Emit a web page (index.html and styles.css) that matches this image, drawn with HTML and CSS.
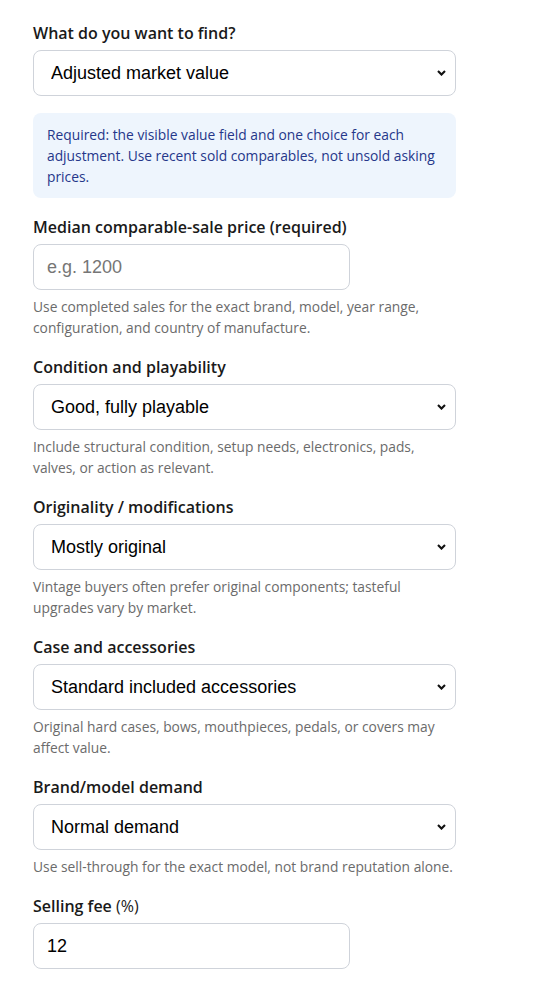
FILE: index.html
```html
<!DOCTYPE html>
<html lang="en">
<head>
<meta charset="utf-8">
<title>Instrument resale value</title>
<link rel="stylesheet" href="styles.css">
</head>
<body>
<form class="calc">
  <div class="field">
    <label class="field-label" for="goal">What do you want to find?</label>
    <select id="goal" class="control">
      <option selected>Adjusted market value</option>
      <option>Net proceeds after fees</option>
    </select>
    <div class="notice">Required: the visible value field and one choice for each adjustment. Use recent sold comparables, not unsold asking prices.</div>
  </div>

  <div class="field">
    <label class="field-label" for="median">Median comparable-sale price (required)</label>
    <input id="median" class="control control-short" type="text" placeholder="e.g. 1200">
    <p class="hint">Use completed sales for the exact brand, model, year range, configuration, and country of manufacture.</p>
  </div>

  <div class="field">
    <label class="field-label" for="condition">Condition and playability</label>
    <select id="condition" class="control">
      <option selected>Good, fully playable</option>
    </select>
    <p class="hint">Include structural condition, setup needs, electronics, pads, valves, or action as relevant.</p>
  </div>

  <div class="field">
    <label class="field-label" for="originality">Originality / modifications</label>
    <select id="originality" class="control">
      <option selected>Mostly original</option>
    </select>
    <p class="hint">Vintage buyers often prefer original components; tasteful upgrades vary by market.</p>
  </div>

  <div class="field">
    <label class="field-label" for="case">Case and accessories</label>
    <select id="case" class="control">
      <option selected>Standard included accessories</option>
    </select>
    <p class="hint">Original hard cases, bows, mouthpieces, pedals, or covers may affect value.</p>
  </div>

  <div class="field">
    <label class="field-label" for="demand">Brand/model demand</label>
    <select id="demand" class="control">
      <option selected>Normal demand</option>
    </select>
    <p class="hint">Use sell-through for the exact model, not brand reputation alone.</p>
  </div>

  <div class="field">
    <label class="field-label" for="fee">Selling fee <span class="unit">(%)</span></label>
    <input id="fee" class="control control-short" type="text" value="12">
  </div>
</form>
</body>
</html>
```

FILE: styles.css
```css
html, body {
  margin: 0;
  padding: 0;
  background: #ffffff;
}

body {
  font-family: "Open Sans", "Noto Sans", sans-serif;
  color: #1a1a1a;
}

.calc {
  width: 423px;
  padding: 21px 0 0 33px;
  display: flex;
  flex-direction: column;
  gap: 17px;
}

.field {
  display: flex;
  flex-direction: column;
}

.field-label {
  font-size: 16px;
  line-height: 24px;
  font-weight: 600;
  color: #1a1a1a;
  margin-bottom: 5px;
}

.field-label .unit {
  font-weight: 400;
}

.control {
  box-sizing: border-box;
  height: 46px;
  width: 100%;
  margin: 0;
  padding: 0 13px;
  border: 1px solid #cfd3da;
  border-radius: 8px;
  background-color: #ffffff;
  font-family: "Liberation Sans", Arial, sans-serif;
  font-size: 18px;
  color: #000000;
  outline: none;
}

select.control {
  -webkit-appearance: none;
  appearance: none;
  padding-left: 17px;
  padding-right: 32px;
  background-image: url("data:image/svg+xml,%3Csvg xmlns='http://www.w3.org/2000/svg' width='9' height='6' viewBox='0 0 9 6'%3E%3Cpath d='M1 1.1 4.5 4.6 8 1.1' fill='none' stroke='%23111' stroke-width='2.1'/%3E%3C/svg%3E");
  background-repeat: no-repeat;
  background-position: right 9px center;
  background-size: 9px 6px;
}

.control-short {
  width: 317px;
}

.control::placeholder {
  color: #767676;
}

.notice {
  margin-top: 17px;
  padding: 11px 14px;
  background: #eef5fd;
  border-radius: 8px;
  color: #25378a;
  font-size: 13.8px;
  line-height: 21px;
}

.hint {
  margin: 6px 0 0;
  font-size: 13.8px;
  line-height: 21px;
  color: #6b6b6b;
}
```
